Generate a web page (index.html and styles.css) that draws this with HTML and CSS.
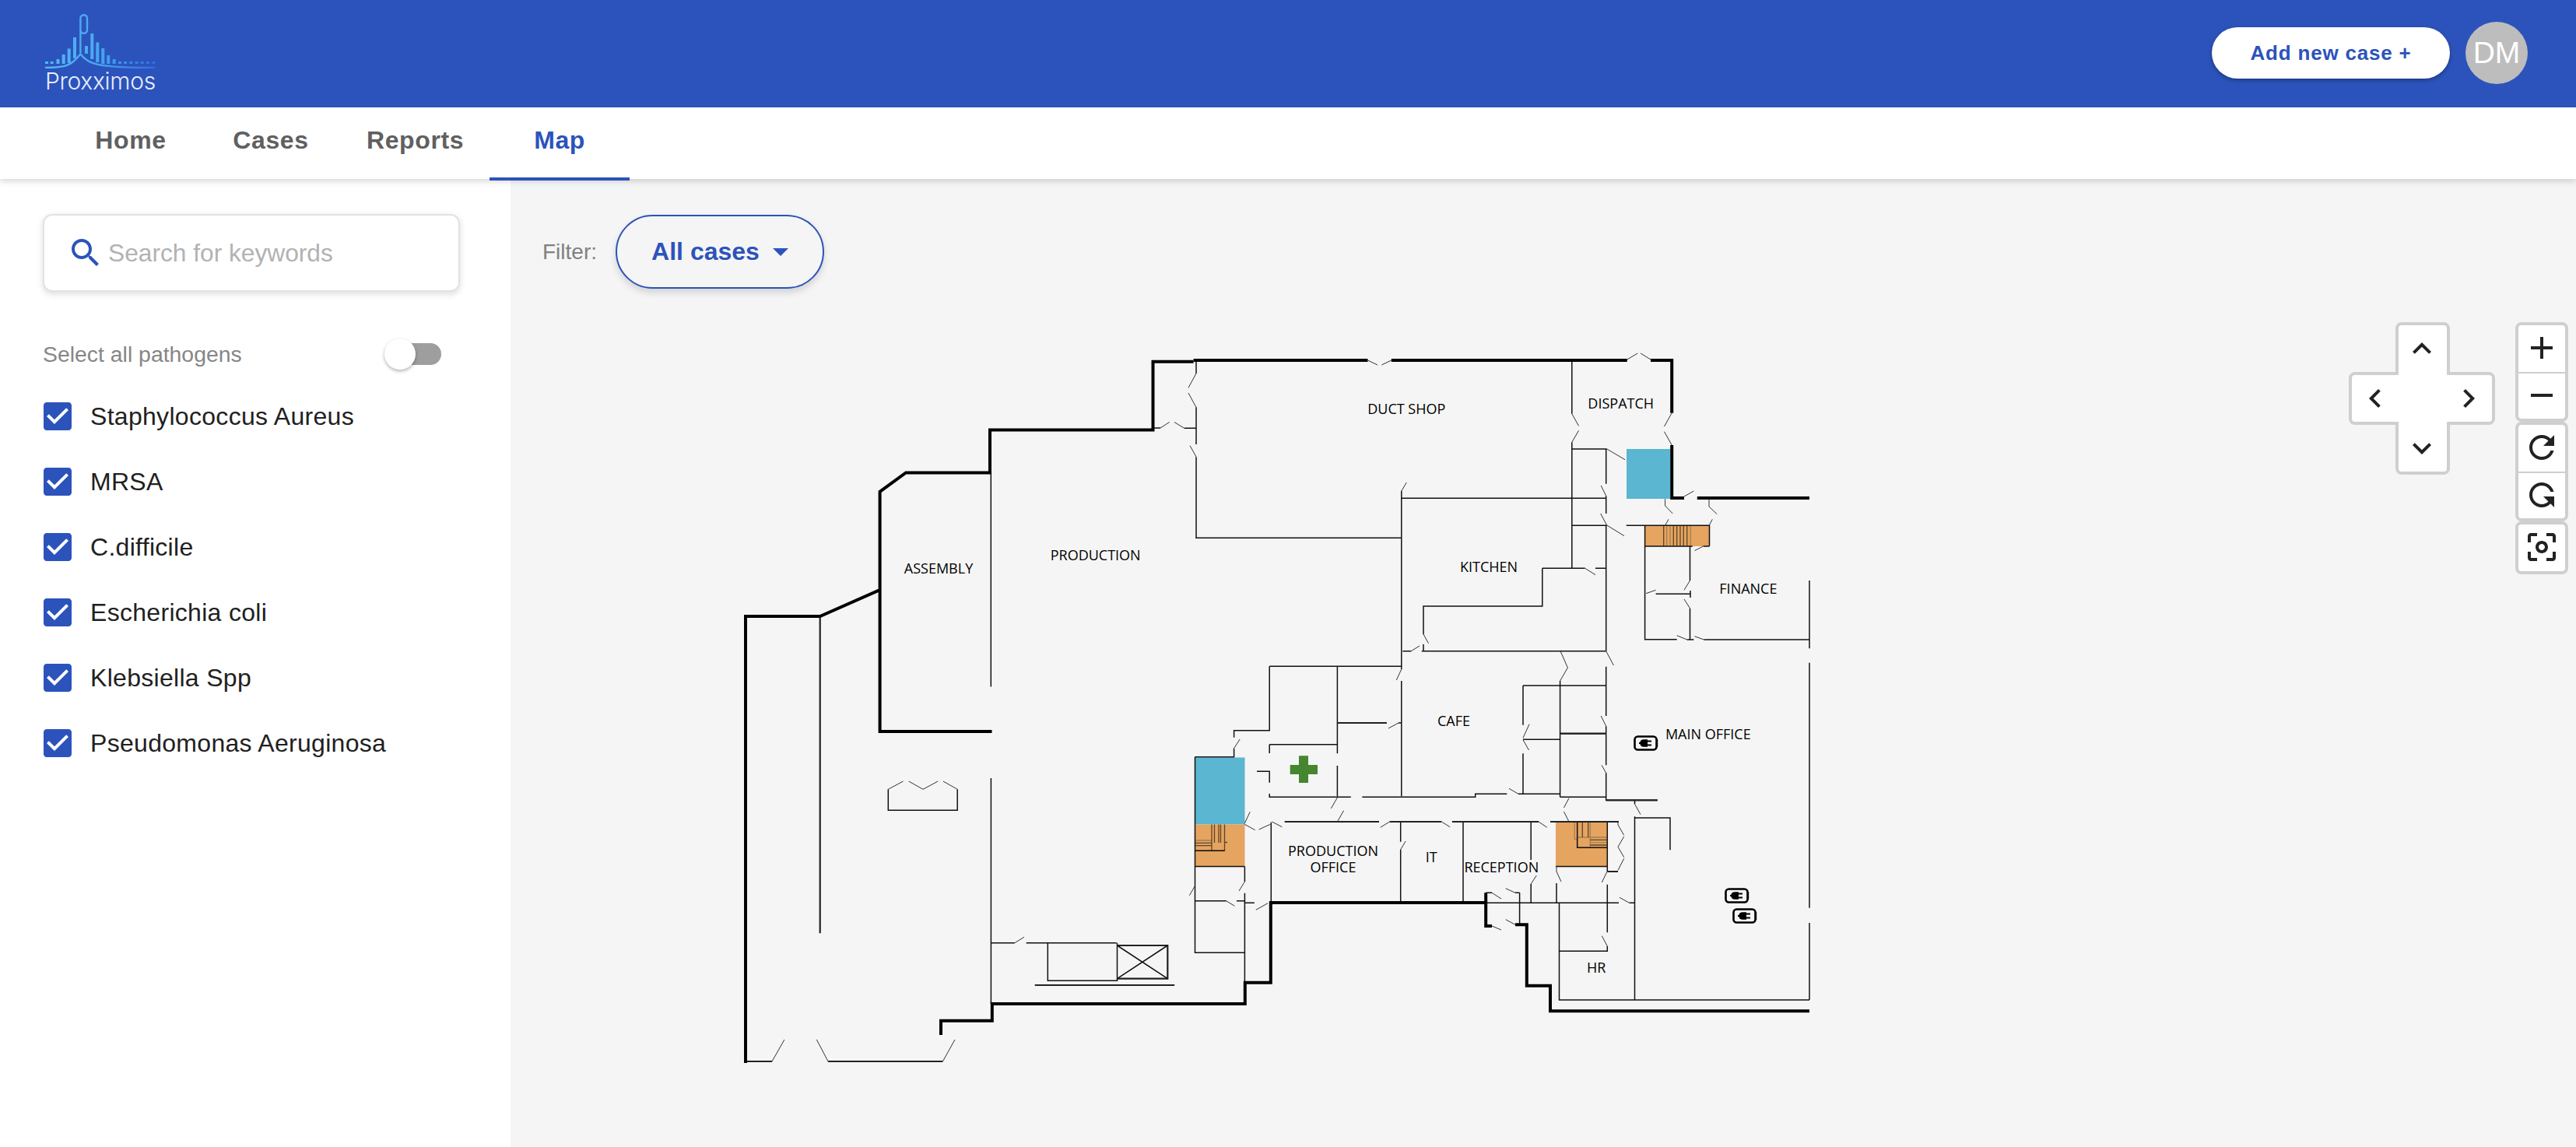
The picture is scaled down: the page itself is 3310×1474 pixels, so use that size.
FILE: index.html
```html
<!DOCTYPE html>
<html lang="en">
<head>
<meta charset="utf-8">
<title>Proxximos Map</title>
<link rel="stylesheet" href="styles.css">
</head>
<body>
<div class="app">
  <header class="topbar">
    <div class="logo">
      <svg class="logo-mark" viewBox="40 10 144 78" width="144" height="78">
        <defs>
          <linearGradient id="lg" gradientUnits="userSpaceOnUse" x1="58" y1="0" x2="200" y2="0">
            <stop offset="0" stop-color="#56b6f2"/><stop offset=".45" stop-color="#49a9f2"/><stop offset="1" stop-color="#2b6fe6"/>
          </linearGradient>
        </defs>
        <g transform="translate(-18 0)">
        <g class="logo-bars">
          <path d="M60 79V82M66.7 79V82M74.5 76V82M81.7 70V82M88.7 62.5V81M96 48V75M111 59V69M118.3 43V76M125.3 54.5V80M132.3 62V82M139.3 71V82M146.7 76V82M154 79V82M161 79V82M168.3 79V82M175.7 79V82M182.7 79V82M190 79V82M197.3 79V82"/>
        </g>
        <path class="logo-stem" d="M103.4 68V23.5a4.3 4.3 0 0 1 8.6 0V38.5a4.3 4.3 0 0 1-8.6 0"/>
        <path class="logo-curve" d="M58 87C85 87 92 84 103.3 69.5C114 83 128 87 199 87"/>
        </g>
      </svg>
      <span class="logo-text">Proxximos</span>
    </div>
    <div class="topbar-right">
      <button class="add-btn">Add new case +</button>
      <div class="avatar">DM</div>
    </div>
  </header>

  <nav class="tabs">
    <a class="tab">Home</a>
    <a class="tab">Cases</a>
    <a class="tab">Reports</a>
    <a class="tab active">Map</a>
  </nav>

  <div class="content">
    <aside class="sidebar">
      <div class="search">
        <svg class="search-icon" viewBox="0 0 24 24"><path d="M15.5 14h-.79l-.28-.27C15.41 12.59 16 11.11 16 9.5 16 5.91 13.09 3 9.5 3S3 5.91 3 9.5 5.91 16 9.5 16c1.61 0 3.09-.59 4.23-1.57l.27.28v.79l5 4.99L20.49 19l-4.99-5zm-6 0C7.01 14 5 11.99 5 9.5S7.01 5 9.5 5 14 7.01 14 9.5 11.99 14 9.5 14z"/></svg>
        <span class="search-text">Search for keywords</span>
      </div>
      <div class="select-all">
        <span class="select-label">Select all pathogens</span>
        <span class="switch"><span class="switch-thumb"></span></span>
      </div>
      <ul class="pathogens">
        <li class="pathogen"><svg class="check" viewBox="3 3 18 18"><path d="M19 3H5c-1.11 0-2 .9-2 2v14c0 1.1.89 2 2 2h14c1.1 0 2-.9 2-2V5c0-1.1-.9-2-2-2zm-9 14l-5-5 1.41-1.41L10 14.17l7.59-7.59L19 8l-9 9z"/></svg>Staphylococcus Aureus</li>
        <li class="pathogen"><svg class="check" viewBox="3 3 18 18"><path d="M19 3H5c-1.11 0-2 .9-2 2v14c0 1.1.89 2 2 2h14c1.1 0 2-.9 2-2V5c0-1.1-.9-2-2-2zm-9 14l-5-5 1.41-1.41L10 14.17l7.59-7.59L19 8l-9 9z"/></svg>MRSA</li>
        <li class="pathogen"><svg class="check" viewBox="3 3 18 18"><path d="M19 3H5c-1.11 0-2 .9-2 2v14c0 1.1.89 2 2 2h14c1.1 0 2-.9 2-2V5c0-1.1-.9-2-2-2zm-9 14l-5-5 1.41-1.41L10 14.17l7.59-7.59L19 8l-9 9z"/></svg>C.difficile</li>
        <li class="pathogen"><svg class="check" viewBox="3 3 18 18"><path d="M19 3H5c-1.11 0-2 .9-2 2v14c0 1.1.89 2 2 2h14c1.1 0 2-.9 2-2V5c0-1.1-.9-2-2-2zm-9 14l-5-5 1.41-1.41L10 14.17l7.59-7.59L19 8l-9 9z"/></svg>Escherichia coli</li>
        <li class="pathogen"><svg class="check" viewBox="3 3 18 18"><path d="M19 3H5c-1.11 0-2 .9-2 2v14c0 1.1.89 2 2 2h14c1.1 0 2-.9 2-2V5c0-1.1-.9-2-2-2zm-9 14l-5-5 1.41-1.41L10 14.17l7.59-7.59L19 8l-9 9z"/></svg>Klebsiella Spp</li>
        <li class="pathogen"><svg class="check" viewBox="3 3 18 18"><path d="M19 3H5c-1.11 0-2 .9-2 2v14c0 1.1.89 2 2 2h14c1.1 0 2-.9 2-2V5c0-1.1-.9-2-2-2zm-9 14l-5-5 1.41-1.41L10 14.17l7.59-7.59L19 8l-9 9z"/></svg>Pseudomonas Aeruginosa</li>
      </ul>
    </aside>

    <main class="map">
      <svg class="plan" viewBox="656 230 2654 1244" width="2654" height="1244">
        <defs>
          <symbol id="plug" viewBox="0 0 32 20">
            <rect class="plug-box" x="1.5" y="1.5" width="28" height="17" rx="4"/>
            <rect x="29" y="5" width="2.2" height="10"/>
            <path class="plug-wire" d="M7 10H13"/>
            <path d="M13 5.2H18V14.8H13A4.8 4.8 0 0 1 13 5.2Z"/>
            <path class="plug-wire" d="M18 7.6H23M18 12.4H23"/>
          </symbol>
        </defs>

        <!-- coloured rooms -->
        <rect class="lift" x="2090" y="577" width="56" height="64"/>
        <rect class="lift" x="1535.5" y="973.5" width="64" height="86"/>
        <rect class="stair" x="2113.5" y="675.5" width="83" height="26.5"/>
        <rect class="stair" x="1535.5" y="1059.5" width="64" height="54"/>
        <rect class="stair" x="1999" y="1056.5" width="66.5" height="57"/>

        <!-- stair treads -->
        <path class="tread-light" d="M2141.7 675.5V701.5M2146 675.5V701.5M2172.3 675.5V701.5M2023.3 1056.5V1078.3H2026.7M2043.3 1056.5V1089M2026.7 1076H2065.5M2043.3 1082.7H2065.5M1535.5 1080H1557"/>
        <path class="tread" d="M2137.7 675.5V701.5M2150.3 675.5V701.5M2154.7 675.5V701.5M2159 675.5V701.5M2163.3 675.5V701.5M2167.7 675.5V701.5M2033.3 1056.5V1076M2040.7 1056.5V1076M2043.3 1079.3H2065.5M2043.3 1086H2065.5M1557 1059.5V1093.3M1560.5 1059.5V1083M1566 1059.5V1083M1568.5 1059.5V1083M1573.5 1059.5V1093.3H1535.5M1573.5 1082.5H1577M1535.5 1083.3H1557M1535.5 1086.7H1557"/>

        <!-- thin inner walls -->
        <path class="thin" d="M2089.7 675.3H2196.5V701.7M2113.6 675.3V821.7H2154.7M2113.6 702H2174.8M2189 702H2196.5M2171.5 702V746M2171.5 781.7V822M2127.6 763.3H2172M2172 759V768M2167.7 822H2176.4M2189.4 822H2325M2325 746V833.3M2325 851.7V1166.7M2325 1186V1285"/>
        <path class="thin" d="M1537 463V480M1537 523.3V571M1537 587.3V691.3H1800.8M1521.7 550.3H1537M1483 550H1491M1800.8 631V860M1800.8 875V1023.3M1800.8 640.3H2063.7M2019.8 463V531.7M2019.8 568.3V730.3M2019.8 577H2064.8M2019.8 675.3H2064.8M2063.7 577V621.7M2063.7 637.3V660M2063.7 675.3V836.7M1981.8 730.3H2036.6M2050 730.3H2063.7M1981.8 730.3V779H1829V815M1829 828V836.7M1826.8 836.7H2063.7M1802.4 836.7H1813.3M1631.2 856.3H1800.8"/>
        <path class="thin" d="M1631.2 856.3V938.7H1585.6V947.7M1585.6 961.7V972.7H1535.2M1631.2 956.7H1718.4M1631.2 956.7V968M1718.4 856.3V968.3M1718.4 984V1023.3M1615 991.3H1631.2V1005.7M1631.2 1020V1024.3H1735.8M1750.4 1024.3H1895.7V1020.3H1936.3M1951 1020.3H2004.6M2004.6 1024.3H2063.7M1718.4 929H1781.8M1797 929H1800.8M1957 881V931.7M1957 968.3V1020.3M1957 881H2063.7M1957 950.3H2004.6M2004.6 875V1024.3M2004.6 942.7H2063.7M2063.7 856.7V920M2063.7 933.3V983.3M2063.7 993.3V1028.3H2129.8"/>
        <path class="thin" d="M1633.3 1056.7V1160M2100.5 1029V1033.3M2100.5 1049.3V1284.3M2100.5 1051H2146V1092.3M1799.7 1056.7V1081.7M1799.7 1091.7V1160M1880 1056.7V1160M1967.2 1056.7V1105M1967.2 1136V1160M2000 1135V1160M2065.3 1056.7V1120M2065.3 1136.7V1198.3M2065.3 1216V1222.3H2003.5M2003.5 1160V1285H2325M1909 1160.3H2080M2093.5 1160.3H2100.5M1952.6 1147.3V1188M1917 1147.3H1909.2M1947 1147.3H1952.6M1999 1113.5H2065.5M2026.7 1056.7V1089.3H2065.5"/>
        <path class="thin" d="M1535.5 973V1224.3H1599.4M1535.5 1113.5H1599.4M1535.5 1093.3H1573.5M1599.4 1113.5V1133.3M1599.4 1147.7V1263M1535.5 1157.7H1575.7M1589 1157.7H1599.4M1599.4 1160.3H1611.9M1273.4 1000V1290M1273.5 1211.7H1303.8M1318.6 1211.7H1434.6M1346.3 1211.7V1260.3H1435.5V1211.7M1141.3 1014.3V1041.3H1230.2V1014.3M1273.3 607.5V882.5"/>
        <path class="medium" d="M1053.7 792V1199.3M1435.5 1215H1500.3V1257.7H1435.5M1329.7 1266H1509.2M992 1364H958M1064 1364H1211.4M2065.3 1120H2079M1650.7 1056H1772M1785.6 1056H1852.3M1865.9 1056H1977M1992 1056H2080M2063.7 1028.3H2129.8M1718.4 929H1781.8M2004.6 942.7H2063.7"/>
        <path class="thin" d="M1435.5 1215L1500.3 1257.7M1500.3 1215L1435.5 1257.7"/>

        <!-- heavy outer walls -->
        <path class="wall" d="M958 1366V792H1053.7L1129.4 758.6"/>
        <path class="wall" d="M1274.5 940H1130.6V631.8L1164 607.5H1272V552.5H1481.5V464.7H1533.6"/>
        <path class="wall" d="M1533.6 463H1757.5M1787.8 463H2090.8M2121 463H2148.2V530.7M2148.2 572V640H2164M2180.8 640H2325"/>
        <path class="wall" d="M1209 1330V1311.7H1274.8V1290H1599.8V1262.7H1632.8V1160H1909.2M1909.2 1147.3V1190H1917M1947 1188.3H1961.8V1266.7H1992V1299.3H2325"/>

        <!-- doors and windows -->
        <path class="door" d="M1757.5 463L1770 469M1775.3 469L1787.8 463M2090.8 462L2104.3 454M2108 454L2121 462M2148.2 530.7L2138.5 548M2138.5 554.7L2148.2 572M1536.9 480L1527 498.3M1527 505L1536.9 523.3M1537 587L1529 572.7M1491 550L1502.6 542.5M1509 542.5L1521.7 550.3M1800.8 631L1807.3 620M2019.8 531.7L2028.5 547.3M2028.5 553.3L2019.8 568.3M2064.8 577L2088 590.7M2057.2 624L2063.7 637.3M2056.7 660L2064.8 675.3M2064.8 675L2087 688.7M2036.6 730.3L2050 738.7M1829 815L1835.5 826.7M1813.3 836.7L1824 830M2005 836.7L2014.4 858M2014.4 858L2004.6 875M2063.7 836.7L2073.4 855M2164 638L2176.4 631"/>
        <path class="door" d="M2139.6 641.3V650L2149.3 660M2139.6 675.3L2144 667.3M2196 641.3V651L2206.2 660.7M2196 675.3L2200.3 667.3M2177.5 707.7L2189 701.7M2171.5 746L2164 758.3M2164 770L2171.5 781.7M2115 762.7L2127.6 758.3M2154.7 816.7L2167.7 822M2177.5 817.7L2189.4 822M1800.8 860L1794.3 874M1593.2 950L1585.6 961.7M1784 936L1797 929M1965 930.7L1957 948.3M1957 950.7L1964.5 964M1939 1013.3L1951 1020.3M2057.2 920L2063.7 933.3M2058 983.3L2063.7 993.3M1718.4 1025L1710.3 1039M1726.6 1041.7L1718.4 1056M2016 1025.7L2009.5 1038M2009.5 1043L2016 1056M2100.5 1033.3L2108 1046.7"/>
        <path class="door" d="M1599.2 1059.3L1612.7 1066.7M1617.6 1066L1632.2 1059.3M1634.4 1056L1647.4 1062.7M1606.2 1043.3L1599.2 1058.3M1773.7 1063.3L1785.6 1056M1852.3 1056L1863.1 1062.7M1977 1056L1987.8 1063.3M1806.2 1081L1799.7 1091.7M1974.3 1125L1967.2 1136M2000 1113.3V1120L2006 1133M2065 1120L2058.3 1134M2079 1056V1060L2086.7 1073.3M2086.7 1075L2079 1088.3L2086.7 1101.7M2086.7 1103.3L2079 1118.3M2081 1153.3L2093.5 1160.3M1917 1147.3L1929 1155M1934.7 1141.7L1947 1147.3M1917 1190L1929 1195M1934.7 1181.7L1947 1188.3M2058.3 1202.7L2065.3 1216M1613.8 1169.3L1629 1160.7M1599.2 1133.3L1592 1145M1535.5 1138.3L1528.4 1150.7M1575.7 1157.7L1586.4 1164.3M992 1364L1007.9 1336M1049.4 1336L1064 1364M1211.4 1364L1227 1336M1141.3 1014.3L1160.5 1004M1167.7 1004L1186 1014.3L1205.2 1004M1211.9 1004L1230.2 1014.3M1303.8 1211.7L1315.9 1204.3"/>

        <!-- first aid -->
        <path class="cross" d="M1669 971.3H1681V983H1693V995H1681V1006H1669V995H1657.7V983H1669Z"/>

        <!-- sockets -->
        <use href="#plug" x="2099" y="945" width="32" height="20"/>
        <use href="#plug" x="2216" y="1141" width="32" height="20"/>
        <use href="#plug" x="2226" y="1167" width="32" height="20"/>

        <!-- room labels -->
        <text class="room" x="1206" y="737">ASSEMBLY</text>
        <text class="room" x="1407.7" y="720">PRODUCTION</text>
        <text class="room" x="1807.3" y="532">DUCT SHOP</text>
        <text class="room" x="2082.7" y="525">DISPATCH</text>
        <text class="room" x="1913" y="735">KITCHEN</text>
        <text class="room" x="2246.4" y="763">FINANCE</text>
        <text class="room" x="1868" y="932.5">CAFE</text>
        <text class="room" x="2194.8" y="949.5">MAIN OFFICE</text>
        <text class="room" x="1713" y="1100">PRODUCTION</text>
        <text class="room" x="1713" y="1121">OFFICE</text>
        <text class="room" x="1839.3" y="1107.5">IT</text>
        <text class="room" x="1929.3" y="1121">RECEPTION</text>
        <text class="room" x="2051.2" y="1250">HR</text>
      </svg>

      <div class="filter">
        <span class="filter-label">Filter:</span>
        <button class="filter-btn">All cases<span class="caret"></span></button>
      </div>

      <div class="controls">
        <svg class="dpad" viewBox="0 0 188 196" width="188" height="196">
          <path class="dpad-shape" d="M62 8a6 6 0 0 1 6-6H122a6 6 0 0 1 6 6V66H180a6 6 0 0 1 6 6V124a6 6 0 0 1-6 6H128V188a6 6 0 0 1-6 6H68a6 6 0 0 1-6-6V130H8a6 6 0 0 1-6-6V72a6 6 0 0 1 6-6H62Z"/>
          <svg x="70" y="10" width="48" height="48" viewBox="0 0 24 24"><path d="M12 8l-6 6 1.41 1.41L12 10.83l4.59 4.58L18 14z"/></svg>
          <svg x="70" y="138" width="48" height="48" viewBox="0 0 24 24"><path d="M16.59 8.59L12 13.17 7.41 8.59 6 10l6 6 6-6z"/></svg>
          <svg x="10" y="74" width="48" height="48" viewBox="0 0 24 24"><path d="M15.41 7.41L14 6l-6 6 6 6 1.41-1.41L10.83 12z"/></svg>
          <svg x="130" y="74" width="48" height="48" viewBox="0 0 24 24"><path d="M10 6L8.59 7.41 13.17 12l-4.58 4.59L10 18l6-6z"/></svg>
        </svg>
        <div class="ctrl-col">
          <div class="ctrl-group">
            <div class="ctrl-btn"><svg class="ctrl-icon" viewBox="0 0 24 24"><path d="M19 13h-6v6h-2v-6H5v-2h6V5h2v6h6v2z"/></svg></div>
            <div class="ctrl-btn"><svg class="ctrl-icon" viewBox="0 0 24 24"><path d="M19 13H5v-2h14v2z"/></svg></div>
          </div>
          <div class="ctrl-group">
            <div class="ctrl-btn"><svg class="ctrl-icon" viewBox="0 0 24 24"><path d="M17.65 6.35C16.2 4.9 14.21 4 12 4c-4.42 0-7.99 3.58-7.99 8s3.57 8 7.99 8c3.73 0 6.84-2.55 7.73-6h-2.08c-.82 2.33-3.04 4-5.65 4-3.31 0-6-2.69-6-6s2.69-6 6-6c1.66 0 3.14.69 4.22 1.78L13 11h7V4l-2.35 2.35z"/></svg></div>
            <div class="ctrl-btn"><svg class="ctrl-icon flip" viewBox="0 0 24 24"><path d="M17.65 6.35C16.2 4.9 14.21 4 12 4c-4.42 0-7.99 3.58-7.99 8s3.57 8 7.99 8c3.73 0 6.84-2.55 7.73-6h-2.08c-.82 2.33-3.04 4-5.65 4-3.31 0-6-2.69-6-6s2.69-6 6-6c1.66 0 3.14.69 4.22 1.78L13 11h7V4l-2.35 2.35z"/></svg></div>
          </div>
          <div class="ctrl-group">
            <div class="ctrl-btn"><svg class="ctrl-icon" viewBox="0 0 24 24"><path d="M5 15H3v4c0 1.1.9 2 2 2h4v-2H5v-4zM5 5h4V3H5c-1.1 0-2 .9-2 2v4h2V5zm14-2h-4v2h4v4h2V5c0-1.1-.9-2-2-2zm0 16h-4v2h4c1.1 0 2-.9 2-2v-4h-2v4zM12 8c-2.21 0-4 1.79-4 4s1.79 4 4 4 4-1.79 4-4-1.79-4-4-4zm0 6c-1.1 0-2-.9-2-2s.9-2 2-2 2 .9 2 2-.9 2-2 2z"/></svg></div>
          </div>
        </div>
      </div>
    </main>
  </div>
</div>
</body>
</html>
```

FILE: styles.css
```css
* { box-sizing: border-box; }
html, body { margin: 0; padding: 0; height: 100%; overflow: hidden; }
body { font-family: "Liberation Sans", Arial, sans-serif; background: #fff; color: #212121; }
.app { display: flex; flex-direction: column; width: 3310px; height: 1474px; }

.topbar { position: relative; z-index: 3; flex: none; height: 138px; background: #2c53bb; display: flex; align-items: flex-start; justify-content: space-between; padding: 0 62px 0 58px; }
.logo { display: flex; flex-direction: column; padding-top: 10px; width: 144px; }
.logo-mark { display: block; width: 144px; height: 78px; }
.logo-bars path { fill: none; stroke: url(#lg); stroke-width: 4; }
.logo-stem { fill: none; stroke: #4cabf0; stroke-width: 2.4; }
.logo-curve { fill: none; stroke: url(#lg); stroke-width: 2.4; }
.logo-text { font-family: Inter, sans-serif; font-weight: 300; font-size: 30px; line-height: 34px; color: #e6edfb; margin-top: -1px; letter-spacing: -.3px; white-space: nowrap; }
.topbar-right { display: flex; align-items: center; gap: 20px; height: 136px; }
.add-btn { width: 306px; height: 66px; border: 0; border-radius: 33px; background: #fff; color: #2c53bb; font: bold 26px "Liberation Sans", Arial, sans-serif; letter-spacing: .8px; box-shadow: 0 2px 5px rgba(0,0,0,.35); }
.avatar { width: 80px; height: 80px; border-radius: 50%; background: #bdbdbd; color: #fff; font-size: 39px; display: flex; align-items: center; justify-content: center; }

.tabs { position: relative; z-index: 2; flex: none; height: 92px; background: #fff; display: flex; padding-left: 78px; box-shadow: 0 3px 8px rgba(0,0,0,.16); }
.tab { min-width: 180px; padding: 0 33px 10px; height: 94px; display: flex; align-items: center; justify-content: center; font-size: 32px; font-weight: bold; letter-spacing: .6px; color: #606060; }
.tab.active { color: #2c53bb; border-bottom: 4px solid #2c53bb; padding-bottom: 6px; }

.content { flex: 1; display: flex; min-height: 0; }
.sidebar { flex: none; width: 656px; background: #fff; padding: 45px 0 0 55px; }
.search { width: 536px; height: 100px; border: 2px solid #e2e2e2; border-radius: 12px; background: #fff; box-shadow: 0 3px 8px rgba(0,0,0,.14); display: flex; align-items: center; padding-left: 29px; gap: 5px; }
.search-icon { width: 48px; height: 48px; fill: #2c53bb; flex: none; }
.search-text { font-size: 31.7px; color: #b2b2b2; }
.select-all { margin-top: 60px; width: 512px; height: 40px; display: flex; align-items: center; justify-content: space-between; }
.select-label { font-size: 28.4px; color: #868686; }
.switch { position: relative; display: block; width: 68px; height: 28px; border-radius: 14px; background: #9e9e9e; }
.switch-thumb { position: absolute; left: -5px; top: -6px; width: 40px; height: 40px; border-radius: 50%; background: #fff; box-shadow: 0 2px 4px rgba(0,0,0,.3); }
.pathogens { list-style: none; margin: 18px 0 0; padding: 0 0 0 1px; }
.pathogen { height: 84px; display: flex; align-items: center; gap: 24px; font-size: 32px; letter-spacing: .3px; color: #212121; }
.check { width: 36px; height: 36px; fill: #2c53bb; flex: none; }

.map { position: relative; flex: 1; background: #f5f5f5; min-width: 0; }
.plan { display: block; }
.wall { fill: none; stroke: #000; stroke-width: 4; stroke-linejoin: miter; }
.medium { fill: none; stroke: #222; stroke-width: 2.2; }
.thin { fill: none; stroke: #111; stroke-width: 1.5; }
.door { fill: none; stroke: #333; stroke-width: 1; }
.tread { fill: none; stroke: #5e4528; stroke-width: 1.3; }
.tread-light { fill: none; stroke: #a47f52; stroke-width: 1.3; }
.lift { fill: #5ab6d1; }
.stair { fill: #e5a45f; }
.cross { fill: #45862f; }
.plug-box { fill: none; stroke: #000; stroke-width: 2.6; }
.plug-wire { fill: none; stroke: #000; stroke-width: 2; }
.room { font-family: "Open Sans", sans-serif; font-size: 18px; font-weight: 500; fill: #000; text-anchor: middle; }

.filter { position: absolute; left: 41px; top: 46px; display: flex; align-items: center; gap: 24px; }
.filter-label { font-size: 28px; color: #808080; }
.filter-btn { width: 268px; height: 95px; border: 2px solid #2c53bb; border-radius: 48px; background: #f5f5f5; color: #2c53bb; font: bold 32px "Liberation Sans", Arial, sans-serif; display: flex; align-items: center; justify-content: center; gap: 17px; box-shadow: 0 5px 10px rgba(0,0,0,.14); }
.caret { width: 0; height: 0; border-left: 10px solid transparent; border-right: 10px solid transparent; border-top: 10px solid #2c53bb; }

.controls { position: absolute; right: 10px; top: 184px; display: flex; align-items: flex-start; gap: 26px; }
.dpad { display: block; fill: #222; }
.dpad-shape { fill: #fff; stroke: #cfcfcf; stroke-width: 4; }
.ctrl-col { display: flex; flex-direction: column; }
.ctrl-group { width: 68px; border: 4px solid #cfcfcf; border-radius: 8px; background: #fff; }
.ctrl-btn { height: 60px; padding-bottom: 2px; display: flex; align-items: center; justify-content: center; }
.ctrl-btn + .ctrl-btn { border-top: 2px solid #cfcfcf; }
.ctrl-icon { width: 48px; height: 48px; fill: #222; flex: none; }
.ctrl-icon.flip { transform: scaleY(-1); }
```
